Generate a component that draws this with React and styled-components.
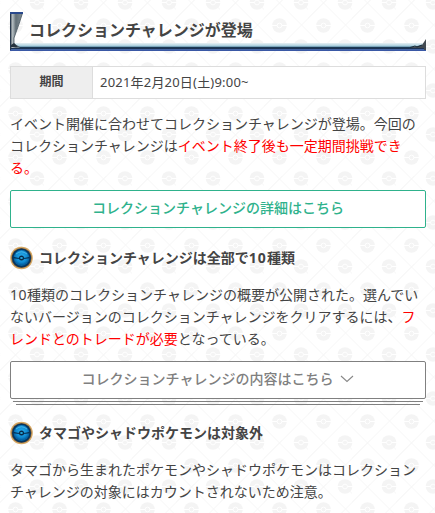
import React from "react";
import styled, { createGlobalStyle } from "styled-components";

const tile = `<svg xmlns='http://www.w3.org/2000/svg' width='44' height='44'>
<g stroke='#f6f6f6' stroke-width='1' fill='none'>
<path d='M-8 -20.5 L59 46.5 M-30 1.5 L37 68.5 M14 -20.5 L81 46.5 M59 -40.5 L-30 48.5 M81 -18.5 L14 48.5 M37 -18.5 L-30 48.5'/>
</g>
<g fill='#f4f4f4'><circle cx='37' cy='2.5' r='7.3'/><circle cx='-7' cy='2.5' r='7.3'/><circle cx='37' cy='46.5' r='7.3'/><circle cx='-7' cy='46.5' r='7.3'/><circle cx='15.5' cy='25.5' r='7.3'/></g>
<g stroke='#fff' fill='#f4f4f4'><path d='M29 2.5H44M0 2.5H1M29 46.5H44M8 25.5H23'/><circle cx='37' cy='2.5' r='2.4'/><circle cx='37' cy='46.5' r='2.4'/><circle cx='15.5' cy='25.5' r='2.4'/></g>
</svg>`;

const GlobalStyle = createGlobalStyle`
  body {
    margin: 0;
    color: #444;
    background: #fff url("data:image/svg+xml,${encodeURIComponent(tile).replace(/'/g, "%27")}");
    font-family: "Noto Sans", "Noto Sans CJK JP", sans-serif;
    font-size: 14px;
    line-height: 22px;
  }
`;

const Article = styled.main`
  box-sizing: border-box;
  width: 435px;
  height: 513px;
  padding: 12px 9px 0 10px;
  overflow: hidden;
`;

const Title = styled.h2`
  position: relative;
  box-sizing: border-box;
  height: 39px;
  margin: 0 0 15px;
  padding: 7px 0 0 19px;
  font-size: 16px;
  line-height: 22px;
`;

const Frame = styled.svg`
  position: absolute;
  left: 0;
  top: 0;
`;

const Table = styled.dl`
  display: grid;
  grid-template-columns: 82px 1fr;
  box-sizing: border-box;
  height: 33px;
  margin: 0 0 14px;
  border: 1px solid #ddd;
  background: #fff;
  font-size: 13px;
  line-height: 30px;
`;

const Term = styled.dt`
  border-right: 1px solid #ddd;
  background: #eee;
  font-size: 12px;
  font-weight: bold;
  text-align: center;
`;

const Detail = styled.dd`
  margin: 0;
  padding-left: 7px;
  letter-spacing: 0.2px;
`;

const Text = styled.p`
  margin: 0 0 11px;
`;

const Red = styled.span`
  color: #f00;
`;

const Digits = styled.span`
  letter-spacing: ${(props) => props.$space || "0.5px"};
`;

const Button = styled.a`
  position: relative;
  display: flex;
  align-items: center;
  justify-content: center;
  box-sizing: border-box;
  height: 38px;
  padding-bottom: 2px;
  border: 1px solid ${(props) => props.color};
  border-radius: 2px;
  background: #fff;
  color: ${(props) => props.color};
  font-weight: 500;
`;

const Accordion = styled(Button)`
  gap: 7px;

  &::before,
  &::after {
    content: "";
    position: absolute;
    height: 1px;
    background: #808080;
  }

  &::before {
    left: 2px;
    right: 2px;
    bottom: -4px;
  }

  &::after {
    left: 5px;
    right: 5px;
    bottom: -7px;
  }
`;

const Heading = styled.h3`
  display: flex;
  align-items: center;
  gap: 5px;
  height: 24px;
  margin: ${(props) => props.$top} 0 14px;
  font-size: 14px;
`;

const TitleFrame = () => (
  <Frame width="416" height="39" viewBox="0 0 416 39">
    <defs>
      <linearGradient id="bar" x1="0" y1="0" x2="0" y2="1">
        <stop offset="0" stopColor="#e7f0f4" />
        <stop offset="0.3" stopColor="#b5d5e2" />
        <stop offset="0.43" stopColor="#86b3c8" />
        <stop offset="0.5" stopColor="#203f58" />
        <stop offset="0.68" stopColor="#172d4c" />
        <stop offset="0.78" stopColor="#4969a5" />
        <stop offset="1" stopColor="#34549c" />
      </linearGradient>
      <linearGradient id="metal">
        <stop offset="0" stopColor="#343e49" />
        <stop offset="0.2" stopColor="#b4bdc1" />
        <stop offset="0.45" stopColor="#626f77" />
        <stop offset="1" stopColor="#87949a" />
      </linearGradient>
    </defs>
    <rect y="31" width="416" height="8" fill="url(#bar)" />
    <path d="M0 0H13L4 26V32L10 36H0Z" fill="url(#metal)" />
    <path d="M12.5 1L9 12L4 26V32L10 35.5" fill="none" stroke="#46545e" strokeWidth="0.8" />
    <path d="M.5 0V38" stroke="#28394e" />
    <path d="M0 1H13" stroke="#29498d" strokeWidth="2" />
    <path d="M1 33L4 31L8 35H1Z" fill="#26333f" />
    <path d="M416 27L412 33L399 36H414V39H416Z" fill="#414950" />
    <path d="M400 35.5L405 34L407 35L412 33" fill="none" stroke="#182d3b" />
    <path d="M0 38.5H416" stroke="#3a58a5" />
  </Frame>
);

const Medal = () => (
  <svg width="24" height="24" viewBox="0 0 24 24">
    <defs>
      <radialGradient id="blue" cx="50%" cy="42%">
        <stop offset="0" stopColor="#2cb0ee" />
        <stop offset="0.7" stopColor="#118bd2" />
        <stop offset="1" stopColor="#0663a3" />
      </radialGradient>
    </defs>
    <circle cx="11.5" cy="12" r="11.3" fill="#d5a763" />
    <circle cx="11.5" cy="12" r="10.1" fill="#805f3a" />
    <circle cx="11.5" cy="12" r="9.5" fill="#07365f" />
    <circle cx="11.5" cy="12" r="7.9" fill="url(#blue)" />
    <path d="M6 8Q11.5 3.5 17 8" fill="none" stroke="#55c3ee" strokeWidth="0.8" />
    <path d="M3.5 11Q11.5 12.8 19.5 11V12.2Q11.5 13.6 3.5 12.2Z" fill="#062847" />
    <circle cx="11.5" cy="12" r="2.5" fill="#062847" />
    <ellipse cx="11.5" cy="12" rx="1.4" ry="0.9" fill="#28a9df" />
  </svg>
);

const Chevron = () => (
  <svg width="14" height="8" viewBox="0 0 14 8">
    <path d="M1 1L7 6.5L13 1" fill="none" stroke="#888" strokeWidth="1.1" />
  </svg>
);

export default function App() {
  return (
    <>
      <GlobalStyle />
      <Article lang="ja">
        <Title>
          <TitleFrame />
          コレクションチャレンジが登場
        </Title>
        <Table>
          <Term>期間</Term>
          <Detail>2021年2月20日(土)9:00~</Detail>
        </Table>
        <Text>
          イベント開催に合わせてコレクションチャレンジが登場。今回のコレクションチャレンジは
          <Red>イベント終了後も一定期間挑戦できる。</Red>
        </Text>
        <Button color="#2fb28c">コレクションチャレンジの詳細はこちら</Button>
        <Heading $top="18px">
          <Medal />
          <span>
            コレクションチャレンジは全部で<Digits $space="1px">10</Digits>種類
          </span>
        </Heading>
        <Text>
          <Digits>10</Digits>
          種類のコレクションチャレンジの概要が公開された。選んでいないバージョンのコレクションチャレンジをクリアするには、
          <Red>フレンドとのトレードが必要</Red>となっている。
        </Text>
        <Accordion color="#808080">
          コレクションチャレンジの内容はこちら
          <Chevron />
        </Accordion>
        <Heading $top="22px">
          <Medal />
          <span>タマゴやシャドウポケモンは対象外</span>
        </Heading>
        <Text>
          タマゴから生まれたポケモンやシャドウポケモンはコレクションチャレンジの対象にはカウントされないため注意。
        </Text>
      </Article>
    </>
  );
}
